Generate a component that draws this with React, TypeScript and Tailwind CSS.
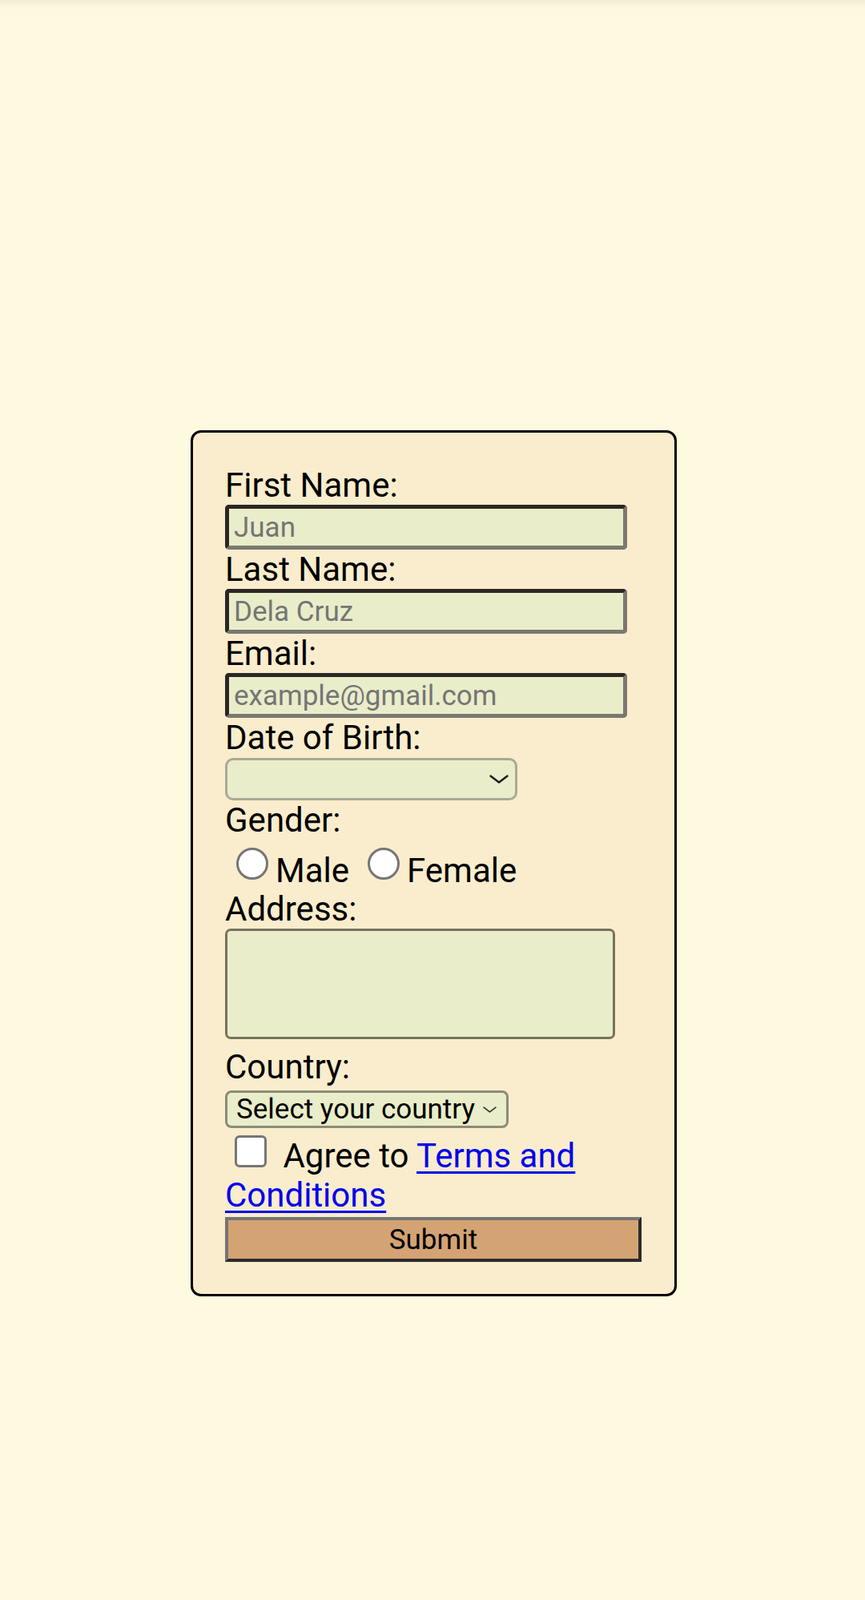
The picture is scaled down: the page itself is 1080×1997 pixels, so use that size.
import React from 'react';

const labelCls = "block text-[42px] leading-[49px] text-black";
const textInputCls =
  "block w-[502px] h-[56px] bg-[#e9edc9] border-[5px] border-t-[#2b2724] border-l-[#2b2724] border-b-[#7a7870] border-r-[#7a7870] rounded-[5px] px-[6px] text-[35px] leading-[41px] text-black placeholder:text-[#757575] outline-none";

function Chevron({ className }: { className?: string }) {
  return (
    <svg className={className} viewBox="0 0 24 11" fill="none">
      <path d="M1.5 1.5L12 9.5L22.5 1.5" stroke="currentColor" strokeWidth="2.4" strokeLinecap="round" strokeLinejoin="round" />
    </svg>
  );
}

function Radio({ label, circleGap, textGap }: { label: string; circleGap: string; textGap: string }) {
  return (
    <div className="flex items-start">
      <span className={"mt-[10px] w-[40px] h-[40px] rounded-full border-[3px] border-[#767676] bg-white " + circleGap} />
      <span className={"mt-[14px] text-[42px] leading-[49px] " + textGap}>{label}</span>
    </div>
  );
}

export default function App() {
  return (
    <div className="min-h-[1997px] bg-[#fefae0] font-[Roboto,sans-serif] text-black">
      <div className="h-[12px] bg-gradient-to-b from-[#f1ebd3] to-[#fefae0]" />
      <div className="pt-[525px]">
        <form
          className="ml-[238px] w-[607px] bg-[#faedcd] border-[3px] border-black rounded-[13px] pt-[41px] pl-[40px] pr-[40px] pb-[40px]"
          onSubmit={(e) => e.preventDefault()}
        >
          <label className={labelCls}>First Name:</label>
          <input className={textInputCls} placeholder="Juan" />

          <label className={labelCls}>Last Name:</label>
          <input className={textInputCls} placeholder="Dela Cruz" />

          <label className={labelCls}>Email:</label>
          <input className={textInputCls} placeholder="example@gmail.com" />

          <label className={labelCls}>Date of Birth:</label>
          <div className="mt-[1px] w-[365px] h-[53px] bg-[#e9edc9] border-[3px] border-[#a9a996] rounded-[10px] flex items-center justify-end pr-[8px]">
            <Chevron className="w-[24px] h-[11px] text-[#1a1a1a]" />
          </div>

          <label className={labelCls}>Gender:</label>
          <div className="h-[62px] flex">
            <Radio label="Male" circleGap="ml-[14px]" textGap="ml-[9px]" />
            <Radio label="Female" circleGap="ml-[23px]" textGap="ml-[9px]" />
          </div>

          <label className={labelCls}>Address:</label>
          <textarea className="block w-[487px] h-[138px] bg-[#e9edc9] border-[3px] border-[#75735f] rounded-[7px] resize-none outline-none" />

          <label className={"mt-[10px] " + labelCls}>Country:</label>
          <div className="mt-[5px] w-[354px] h-[47px] bg-[#e9edc9] border-[3px] border-[#8d8b78] rounded-[8px] flex items-center pl-[11px] pr-[12px] justify-between">
            <span className="text-[35px] leading-[41px]">Select your country</span>
            <Chevron className="w-[17px] h-[8px] text-[#333]" />
          </div>

          <p className="text-[42px] leading-[49px]">
            <span className="inline-block mt-[9px] ml-[12px] mr-[10px] w-[40px] h-[40px] rounded-[6px] border-[3px] border-[#767676] bg-white" />{' '}
            Agree to{' '}
            <a href="#" className="text-[#0000ee] underline decoration-[3px] underline-offset-[5px]">
              Terms and
              <br />
              Conditions
            </a>
          </p>

          <button
            type="submit"
            className="block mt-[3px] w-[520px] h-[56px] bg-[#d4a373] border-[4px] border-t-[#767676] border-l-[#767676] border-b-[#2b2b2b] border-r-[#2b2b2b] text-[35px] leading-[41px] text-black"
          >
            Submit
          </button>
        </form>
      </div>
    </div>
  );
}
